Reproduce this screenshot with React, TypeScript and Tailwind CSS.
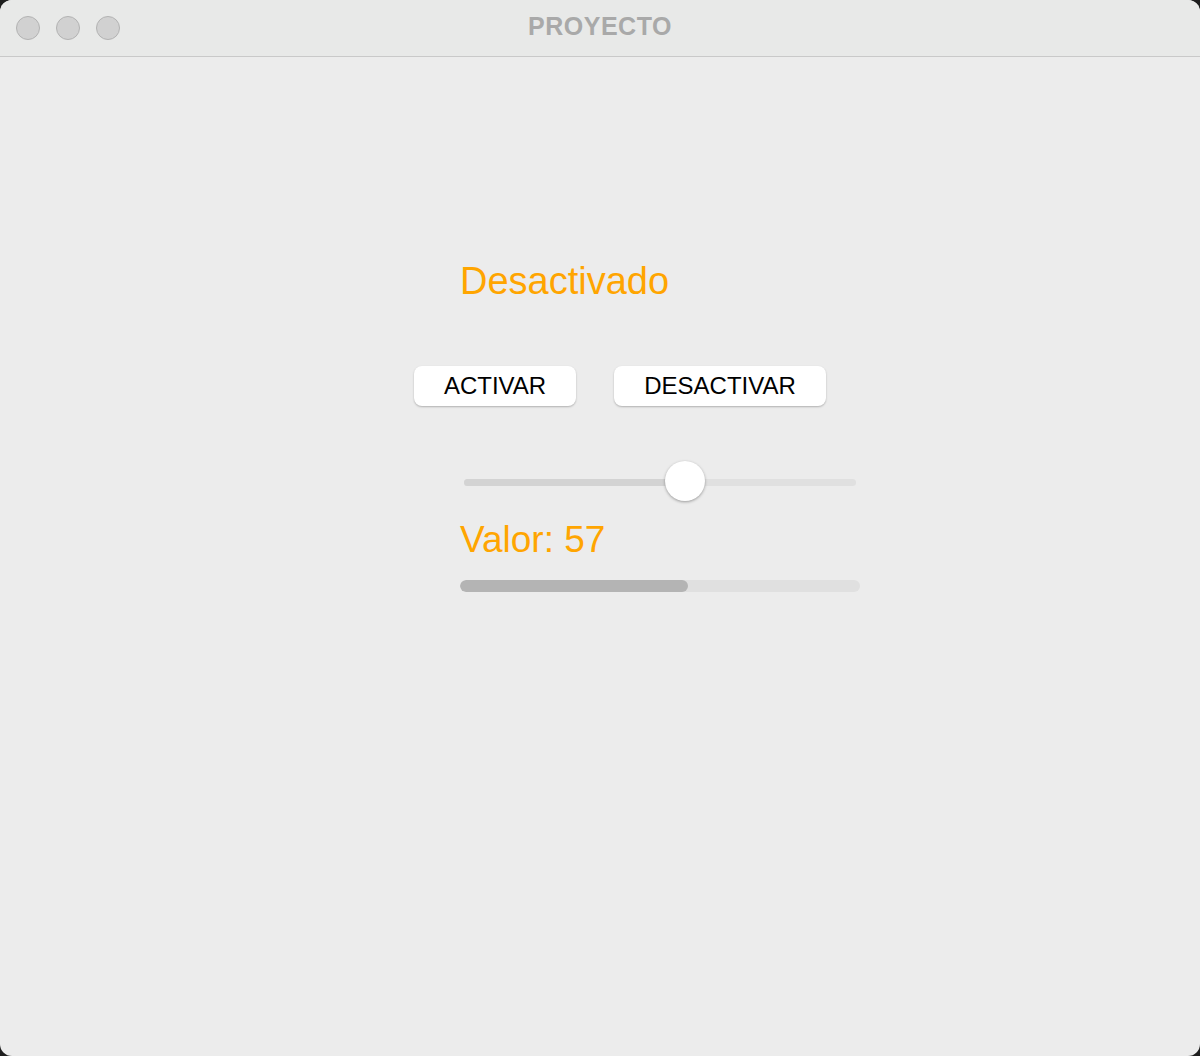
import React from 'react';

const font = { fontFamily: '"Liberation Sans", Arial, sans-serif' };

const TrafficLight = () => (
  <div className="w-6 h-6 rounded-full bg-[#d1d1d1] border border-[#b3b3b3]" />
);

export default function App() {
  const value = 57;

  return (
    <div className="w-[1200px] h-[1056px] bg-[#1e1e1e]" style={font}>
      <div className="w-full h-full rounded-[12px] overflow-hidden bg-[#ececec] flex flex-col">
        {/* title bar */}
        <div className="h-[57px] shrink-0 bg-[#e8e9e8] border-b border-[#c9c9c9] flex items-center px-4 relative">
          <div className="flex gap-4">
            <TrafficLight />
            <TrafficLight />
            <TrafficLight />
          </div>
          <div className="absolute inset-0 flex items-center justify-center pb-[3px]">
            <span className="text-[25px] font-bold text-[#a9a9a9] tracking-[0.5px]">PROYECTO</span>
          </div>
        </div>

        {/* content */}
        <div className="flex-1 flex flex-col pl-[414px]">
          <div className="mt-[202px] pl-[46px] text-[38px] leading-[44px] text-[#ffa500]">
            Desactivado
          </div>

          <div className="mt-[63px] flex gap-[38px]">
            <button className="w-[162px] h-10 bg-white rounded-[8px] shadow-[0_1px_2px_rgba(0,0,0,0.25)] text-[24px] text-black">
              ACTIVAR
            </button>
            <button className="w-[212px] h-10 bg-white rounded-[8px] shadow-[0_1px_2px_rgba(0,0,0,0.25)] text-[24px] text-black">
              DESACTIVAR
            </button>
          </div>

          {/* slider */}
          <div className="mt-[55px] ml-[50px] w-[392px] h-[42px] relative flex items-center">
            <div className="w-full h-[7px] rounded-full bg-[#e0e0e0] flex overflow-hidden">
              <div className="h-full bg-[#d3d3d3]" style={{ width: `${value}%` }} />
            </div>
            <div
              className="absolute top-0 w-10 h-10 rounded-full bg-white shadow-[0_1px_3px_rgba(0,0,0,0.35)]"
              style={{ left: `calc(${(value / 100) * 392}px - 22px)` }}
            />
          </div>

          <div className="mt-[15px] pl-[46px] text-[37px] leading-[44px] text-[#ffa500]">
            Valor: {value}
          </div>

          <div className="mt-[18px] ml-[46px] w-[400px] h-3 rounded-full bg-[#e0e0e0] overflow-hidden">
            <div className="h-full rounded-full bg-[#b4b4b4]" style={{ width: `${value}%` }} />
          </div>
        </div>
      </div>
    </div>
  );
}
